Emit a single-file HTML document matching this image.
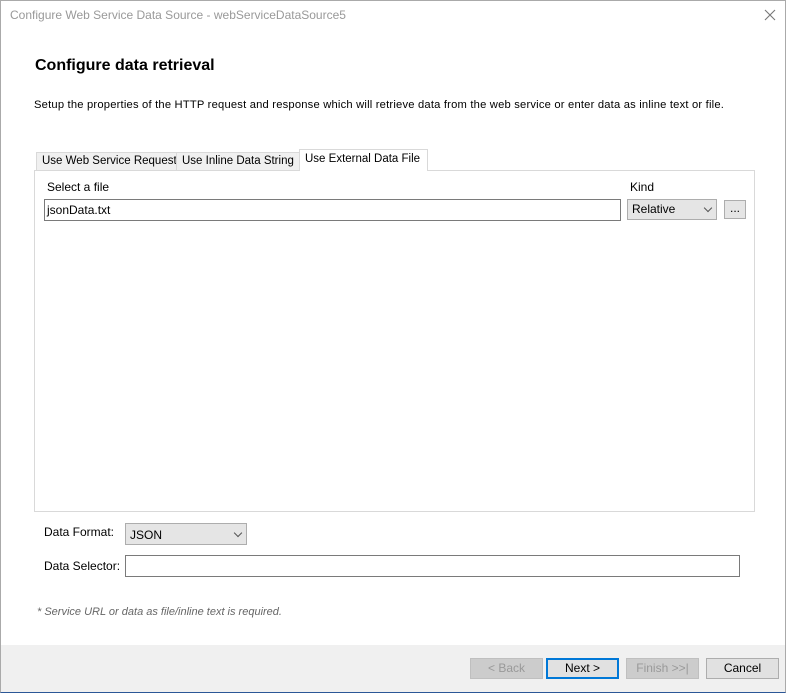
<!DOCTYPE html>
<html><head><style>
*{box-sizing:border-box;margin:0;padding:0}
body{width:786px;height:693px;overflow:hidden;background:#fff;font-family:"Liberation Sans",sans-serif;font-size:12px;color:#000;position:relative}
.a{position:absolute;white-space:nowrap}
.win{position:absolute;left:0;top:0;width:786px;height:693px;border:1px solid #aaa;border-bottom:1px solid #2b5797}
.tab{position:absolute;top:152px;height:19px;border:1px solid #d9d9d9;background:#f0f0f0;padding:2px 0 0 5px;font-size:11.5px;white-space:nowrap;overflow:hidden}
.btn{position:absolute;top:658px;height:21px;border:1px solid #adadad;background:#e1e1e1;text-align:center;line-height:19px;font-size:12px}
.sel{position:absolute;border:1px solid #adadad;background:#e5e5e5;padding:2px 0 0 4px}
.chev{position:absolute;right:5px;top:5px;width:6px;height:6px;border-right:1px solid #555;border-bottom:1px solid #555;transform:rotate(45deg)}
</style></head><body>
<div class="win"></div>
<div class="a" style="left:10px;top:8px;color:#999;font-size:12px">Configure Web Service Data Source - webServiceDataSource5</div>
<svg style="position:absolute;left:764px;top:9px" width="12" height="12"><path d="M1 1L11 11M11 1L1 11" stroke="#777" stroke-width="1.1"/></svg>
<div class="a" style="left:35px;top:57px;font-size:16px;font-weight:bold">Configure data retrieval</div>
<div class="a" style="left:34px;top:99px;font-size:11.2px;letter-spacing:0.2px">Setup the properties of the HTTP request and response which will retrieve data from the web service or enter data as inline text or file.</div>
<div style="position:absolute;left:34px;top:170px;width:721px;height:342px;border:1px solid #d9d9d9;background:#fff"></div>
<div class="tab" style="left:36px;width:141px">Use Web Service Request</div>
<div class="tab" style="left:176px;width:124px">Use Inline Data String</div>
<div class="tab" style="left:299px;top:149px;width:129px;height:22px;background:#fff;border-bottom:none;padding-top:3px">Use External Data File</div>
<div class="a" style="left:47px;top:180px">Select a file</div>
<div class="a" style="left:630px;top:180px">Kind</div>
<div style="position:absolute;left:44px;top:199px;width:577px;height:22px;border:1px solid #7a7a7a;padding:3px 0 0 2px">jsonData.txt</div>
<div class="sel" style="left:627px;top:199px;width:90px;height:21px">Relative<div class="chev"></div></div>
<div class="sel" style="left:724px;top:200px;width:22px;height:19px;text-align:center;padding:0">...</div>
<div class="a" style="left:44px;top:525px">Data Format:</div>
<div class="sel" style="left:125px;top:523px;width:122px;height:22px;padding-top:4px">JSON<div class="chev" style="top:6px"></div></div>
<div class="a" style="left:44px;top:559px">Data Selector:</div>
<div style="position:absolute;left:125px;top:555px;width:615px;height:22px;border:1px solid #7a7a7a"></div>
<div class="a" style="left:37px;top:606px;color:#666;font-style:italic;font-size:11px">* Service URL or data as file/inline text is required.</div>
<div style="position:absolute;left:1px;top:645px;width:784px;height:47px;background:#f0f0f0"></div>
<div class="btn" style="left:470px;width:73px;color:#999;background:#ccc;border-color:#bfbfbf">&lt; Back</div>
<div class="btn" style="left:546px;width:73px;border:2px solid #0078d7;line-height:17px">Next &gt;</div>
<div class="btn" style="left:626px;width:73px;color:#999;background:#ccc;border-color:#bfbfbf">Finish &gt;&gt;|</div>
<div class="btn" style="left:706px;width:73px">Cancel</div>
</body></html>
